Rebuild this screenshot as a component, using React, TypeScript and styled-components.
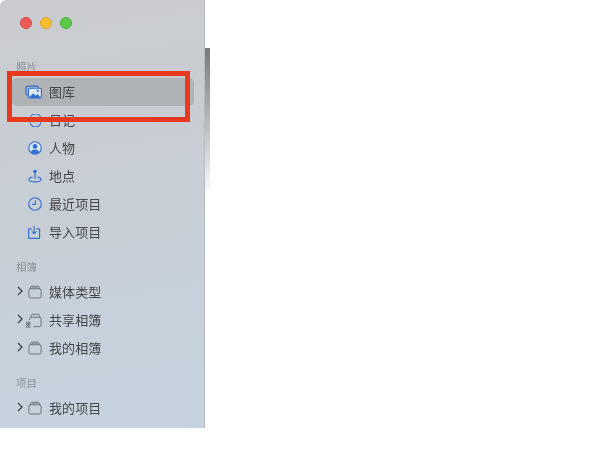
import React from "react";
import styled, { createGlobalStyle } from "styled-components";

const Global = createGlobalStyle`
  html, body { margin: 0; padding: 0; background: #fff; }
  body { font-family: "Noto Sans CJK SC", "Noto Sans", sans-serif; }
`;

const Page = styled.div`
  position: relative;
  width: 600px;
  height: 450px;
  overflow: hidden;
  display: flex;
  align-items: flex-start;
`;

const Sidebar = styled.aside`
  width: 205px;
  height: 428px;
  box-sizing: border-box;
  padding: 17px 10px 0 12px;
  background: linear-gradient(170deg, #cacccf 0%, #c8cdd3 35%, #c6d1db 75%, #c6d3de 100%);
  border-right: 1px solid #b4bbc2;
  border-top-left-radius: 6px;
  display: flex;
  flex-direction: column;
  filter: blur(0.45px);
`;

const Lights = styled.div`
  display: flex;
  gap: 8px;
  padding-left: 8px;
  height: 12px;
`;

const Light = styled.span<{ $fill: string; $edge: string }>`
  width: 12px;
  height: 12px;
  border-radius: 50%;
  box-sizing: border-box;
  background: ${(p) => p.$fill};
  border: 1px solid ${(p) => p.$edge};
`;

const SectionTitle = styled.div<{ $top: number }>`
  margin-top: ${(p) => p.$top}px;
  margin-bottom: 3px;
  padding-left: 4px;
  height: 16px;
  line-height: 16px;
  font-size: 10.5px;
  color: #8b9097;
`;

const Row = styled.div<{ $active?: boolean }>`
  height: 28px;
  display: flex;
  align-items: center;
  position: relative;
  border-radius: 5px;
  background: ${(p) => (p.$active ? "#b0b3b5" : "transparent")};
  font-size: 13px;
  color: #44474b;
`;

const Chevron = styled.svg`
  position: absolute;
  left: 3.5px;
  top: 8px;
`;

const IconSlot = styled.span`
  width: 37px;
  height: 28px;
  display: flex;
  align-items: center;
  justify-content: flex-end;
  padding-right: 7px;
  box-sizing: border-box;
  flex: none;
`;

const Label = styled.span`
  line-height: 27px;
  padding-bottom: 1px;
  letter-spacing: 0.1px;
`;

const Thumb = styled.div`
  width: 5px;
  height: 142px;
  margin-top: 48px;
  background: linear-gradient(180deg, #77797c 0%, #a2a4a6 35%, #d6d7d9 75%, #fafafa 100%);
`;

const Annotation = styled.div`
  position: absolute;
  left: 7px;
  top: 71px;
  width: 183px;
  height: 51px;
  box-sizing: border-box;
  border: 5px solid #e8391f;
`;

const BLUE = "#2f6fd6";
const GRAY = "#6a6e73";

const LibraryIcon = () => (
  <svg width="17" height="14" viewBox="0 0 18 14" fill="none">
    <path d="M3 10H2.2A1.2 1.2 0 0 1 1 8.8V2A1.2 1.2 0 0 1 2.2.8h10.6A1.2 1.2 0 0 1 14 2v.8" stroke={BLUE} strokeWidth="1.2" />
    <rect x="3.6" y="3" width="13.8" height="10.4" rx="1.4" fill="#dfe8f5" stroke={BLUE} strokeWidth="1.2" />
    <path d="M4 13.4l4.5-5 3 2.6 2-1.8 3.5 4.2z" fill={BLUE} />
    <circle cx="13.5" cy="5.8" r="1.2" fill={BLUE} />
  </svg>
);

const MemoryIcon = () => (
  <svg width="13" height="13" viewBox="0 0 13 13" fill="none" stroke={BLUE} strokeWidth="1.1">
    <path d="M1 4.6A5.6 5.6 0 0 1 12 4.6" />
    <path d="M1 8.4A5.6 5.6 0 0 0 12 8.4" />
    <path d="M3 6.5h7" />
  </svg>
);

const PersonIcon = () => (
  <svg width="14" height="14" viewBox="0 0 15 15" fill="none">
    <circle cx="7.5" cy="7.5" r="6.7" stroke={BLUE} strokeWidth="1.2" fill="#dbe4f0" />
    <circle cx="7.5" cy="5.8" r="2.5" fill={BLUE} />
    <path d="M2.9 12c1-2 2.8-2.8 4.6-2.8s3.6.8 4.6 2.8a6.6 6.6 0 0 1-9.2 0z" fill={BLUE} />
  </svg>
);

const PlaceIcon = () => (
  <svg width="14" height="14" viewBox="0 0 15 15" fill="none" stroke={BLUE} strokeWidth="1.2">
    <circle cx="7.5" cy="2.6" r="1.9" fill={BLUE} stroke="none" />
    <path d="M7.5 4v6.6" />
    <path d="M5 8.6c-2.2.4-3.9 1.3-3.9 2.6 0 1.5 2.9 2.6 6.4 2.6s6.4-1.1 6.4-2.6c0-1.3-1.7-2.2-3.9-2.6" />
  </svg>
);

const ClockIcon = () => (
  <svg width="14" height="14" viewBox="0 0 15 15" fill="none" stroke={BLUE} strokeWidth="1.2">
    <circle cx="7.5" cy="7.5" r="6.7" />
    <path d="M7.8 3.6v4.3H4.4" />
  </svg>
);

const ImportIcon = () => (
  <svg width="14" height="14" viewBox="0 0 15 15" fill="none" stroke={BLUE} strokeWidth="1.2">
    <path d="M4 4.2H1.2a.6.6 0 0 0-.6.6v8.8c0 .4.3.7.6.7h10.6c.3 0 .6-.3.6-.7V4.8a.6.6 0 0 0-.6-.6H9" />
    <path d="M6.5 1v8.2M4 6.9l2.5 2.5L9 6.9" />
  </svg>
);

const AlbumIcon = () => (
  <svg width="14" height="14" viewBox="0 0 15 14" fill="none" stroke={GRAY} strokeWidth="1">
    <path d="M2.6 3.6V2.4c0-.9.6-1.6 1.5-1.6h6.8c.9 0 1.5.7 1.5 1.6v1.2" />
    <path d="M4 2.4h7" strokeWidth="0.8" />
    <rect x="1" y="3.6" width="13" height="9.8" rx="1.4" />
  </svg>
);

const SharedIcon = () => (
  <svg width="17" height="15" viewBox="0 0 18 15" fill="none" stroke={GRAY} strokeWidth="1">
    <path d="M5 7V5.4c0-.8.6-1.4 1.4-1.4h9.2c.8 0 1.4.6 1.4 1.4v7.2c0 .8-.6 1.4-1.4 1.4H9" />
    <path d="M6.6 4V2.4c0-.8.5-1.4 1.3-1.4h6.2c.8 0 1.3.6 1.3 1.4V4" />
    <circle cx="3.4" cy="11" r="2.1" />
    <circle cx="3.4" cy="11" r="0.8" fill={GRAY} />
    <path d="M1 14.4h4.8" strokeWidth="1.2" />
  </svg>
);

type Item = { label: string; icon: React.ReactNode; chevron?: boolean; active?: boolean };

const NavRow = ({ label, icon, chevron, active }: Item) => (
  <Row $active={active}>
    {chevron && (
      <Chevron width="8" height="10" viewBox="0 0 8 10" fill="none" stroke="#44474b" strokeWidth="1.4">
        <path d="M2 1l4 4-4 4" />
      </Chevron>
    )}
    <IconSlot>{icon}</IconSlot>
    <Label>{label}</Label>
  </Row>
);

const photos: Item[] = [
  { label: "图库", icon: <LibraryIcon />, active: true },
  { label: "日记", icon: <MemoryIcon /> },
  { label: "人物", icon: <PersonIcon /> },
  { label: "地点", icon: <PlaceIcon /> },
  { label: "最近项目", icon: <ClockIcon /> },
  { label: "导入项目", icon: <ImportIcon /> },
];

const albums: Item[] = [
  { label: "媒体类型", icon: <AlbumIcon />, chevron: true },
  { label: "共享相簿", icon: <SharedIcon />, chevron: true },
  { label: "我的相簿", icon: <AlbumIcon />, chevron: true },
];

export default function App() {
  return (
    <Page>
      <Global />
      <Sidebar>
        <Lights>
          <Light $fill="#ec5a57" $edge="#d4453f" />
          <Light $fill="#f5bd30" $edge="#dfa52a" />
          <Light $fill="#5cc84a" $edge="#49ac3a" />
        </Lights>
        <SectionTitle $top={30}>照片</SectionTitle>
        {photos.map((i) => <NavRow key={i.label} {...i} />)}
        <SectionTitle $top={13}>相簿</SectionTitle>
        {albums.map((i) => <NavRow key={i.label} {...i} />)}
        <SectionTitle $top={13}>项目</SectionTitle>
        <NavRow label="我的项目" icon={<AlbumIcon />} chevron />
      </Sidebar>
      <Thumb />
      <Annotation />
    </Page>
  );
}
